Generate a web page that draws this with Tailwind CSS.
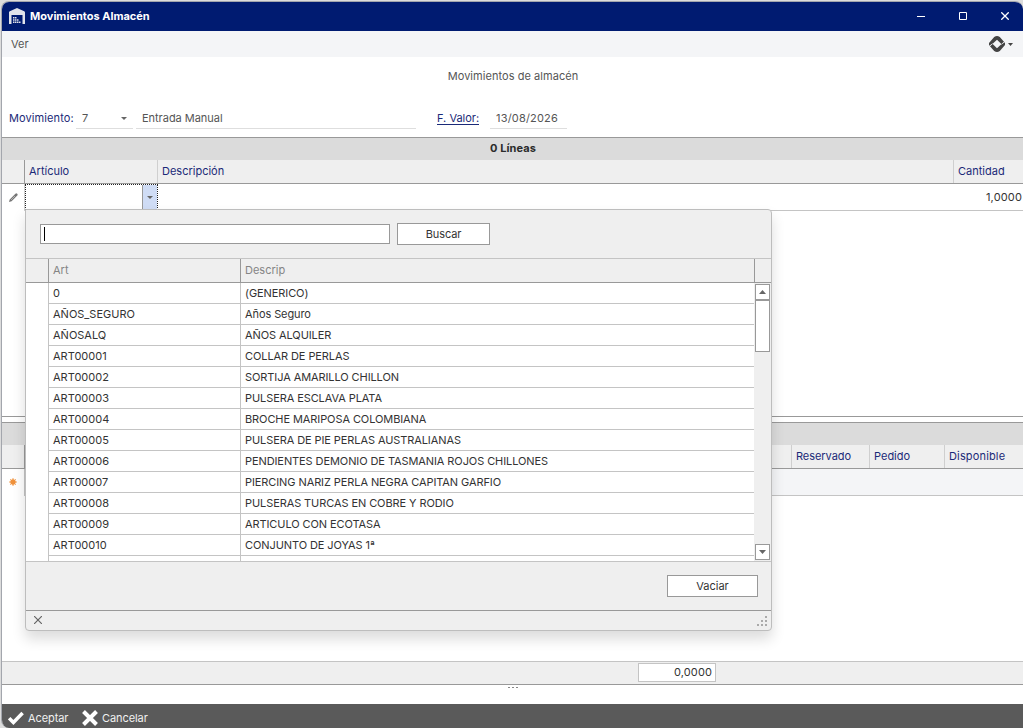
<!DOCTYPE html>
<html lang="es">
<head>
    <meta charset="UTF-8">
    <meta name="viewport" content="width=device-width, initial-scale=1.0">
    <title>Movimientos Almacén</title>
    <script src="https://cdn.jsdelivr.net/npm/@tailwindcss/browser@4"></script>
</head>
<body class="bg-[#dcdcdc] overflow-hidden font-['Inter','Liberation_Sans',sans-serif] text-[11px] leading-4 text-[#555]">
    <div class="pl-px pt-px w-[1023px] h-[728px]">
    <div class="relative flex flex-col h-[727px] border-l border-t border-[#a3a6ad] rounded-tl-lg rounded-tr-lg rounded-bl-lg overflow-hidden bg-white">

        <!-- Title bar -->
        <header class="flex items-center h-[29px] shrink-0 bg-[#001b71] text-white pl-[7px]">
            <svg class="w-4 h-4 -mt-px" viewBox="0 0 16 16" fill="#e0e3ea">
                <path d="M0 16V4.500Q0 3.600.8 3.200L8 0l7.200 3.200Q16 3.600 16 4.500V16h-2.500V7H2.500v9z"/>
                <path d="M4 9h1.500v1.500H4zM6 9h1.500v1.500H6zM4 11.300h1.500v1.500H4zM6 11.300h1.500v1.500H6zM8 11.300h1.500v1.500H8zM4 13.600h1.500v1.500H4zM6 13.600h1.500v1.500H6zM8 13.600h1.500v1.500H8zM10 13.600h1.500v1.500H10z"/>
            </svg>
            <h1 class="ml-[5px] -mt-[2px] font-bold">Movimientos Almacén</h1>
            <div class="ml-auto flex items-center gap-[34px] pr-[14px] -mt-px">
                <svg class="w-2 h-2" viewBox="0 0 8 8"><path d="M0 4.500h8" stroke="#fff"/></svg>
                <svg class="w-2 h-2" viewBox="0 0 8 8"><path d="M.5.5h7v7h-7z" fill="none" stroke="#fff"/></svg>
                <svg class="w-2 h-2" viewBox="0 0 8 8"><path d="M.3.3l7.400 7.400M7.700.3L.3 7.700" stroke="#fff" stroke-width="1.300"/></svg>
            </div>
        </header>

        <!-- Menu -->
        <nav class="flex items-center h-[26px] shrink-0 bg-[#f4f5f7] pl-[9px] pr-[10px]">
            <span>Ver</span>
            <svg class="ml-auto w-4 h-4" viewBox="0 0 16 16" fill="#444">
                <path d="M0 9.800V7L5.200 1Q8-.9 10.800 1L15.200 6 12.600 8.200 8 3.800 3.400 8z"/>
                <path d="M16 6.200V9L10.800 15Q8 16.900 5.200 15L.8 10 3.400 7.800 8 12.200 12.600 8z"/>
                <path d="M.4 10.300L3.600 7.700M15.600 5.700L12.400 8.300" stroke="#f4f5f7" stroke-width=".8"/>
            </svg>
            <svg class="ml-[3px] w-[5px] h-[3px]" viewBox="0 0 5 3" fill="#444"><path d="M0 0h5L2.500 3z"/></svg>
        </nav>

        <!-- Form -->
        <section class="h-20 shrink-0 pt-[11px] pl-[7px] tracking-[0.05px]">
            <h2 class="text-center pr-[6px]">Movimientos de almacén</h2>
            <div class="flex mt-[25px] h-5 leading-[19px]">
                <label class="w-[67px] tracking-[0.1px] text-[#1b2a78]">Movimiento:</label>
                <div class="flex items-center justify-between w-[57px] border-b border-[#dedede] pl-[6px] pr-[6px]">
                    <span>7</span>
                    <svg class="w-[6px] h-[3px]" viewBox="0 0 6 3" fill="#666"><path d="M0 0h6L3 3z"/></svg>
                </div>
                <div class="ml-[3px] w-[280px] border-b border-[#dedede] pl-[6px] tracking-[-0.03px]">Entrada Manual</div>
                <div class="ml-[21px] w-[53px]"><a class="inline-block h-4 border-b border-[#1b2a78] text-[#1b2a78] tracking-normal">F. Valor:</a></div>
                <div class="w-[77px] border-b border-[#dedede] pl-[6px] tracking-[0.18px]">13/08/2026</div>
            </div>
        </section>

        <!-- Lines grid -->
        <section class="h-[280px] shrink-0 border-y border-[#999]">
            <div class="h-[22px] bg-[#dbdbdb] text-center leading-[21px] font-bold text-[#2b2b2b] tracking-[0.08px] pl-px">0 Líneas</div>
            <div class="grid grid-cols-[23px_133px_796px_1fr] h-6 bg-[#efefef] border-b border-[#999] leading-[23px] text-[#1b2a78]">
                <div class="border-r border-[#999]"></div>
                <div class="border-r border-[#cfcfcf] pl-1">Artículo</div>
                <div class="border-r border-[#cfcfcf] pl-1">Descripción</div>
                <div class="pl-1">Cantidad</div>
            </div>
            <div class="flex h-[27px]">
                <div class="flex items-center w-[23px] border-r border-[#d0d0d0] pl-[7px]">
                    <svg class="w-[9px] h-[9px] -mt-px" viewBox="0 0 9 9"><path d="M0 9l.7-2.600L6.400.7Q7.300-.1 8.200.8t.1 1.800L2.600 8.300z" fill="#777"/><path d="M2 7l4-4" stroke="#ccc" stroke-width=".7"/></svg>
                </div>
                <div class="flex w-[133px] h-[26px] border border-dotted border-[#222]">
                    <div class="flex-1"></div>
                    <div class="flex items-center justify-center w-[15px] border-l border-[#999] bg-[#cfdcf5]">
                        <svg class="w-[6px] h-[3px]" viewBox="0 0 6 3" fill="#666"><path d="M0 0h6L3 3z"/></svg>
                    </div>
                </div>
                <div class="flex-1 border-b border-[#c4c4c4] pr-px text-right leading-[26px] text-[#333] tracking-[0.15px]">1,0000</div>
            </div>
        </section>

        <!-- Stock grid -->
        <section class="mt-[5px] h-[239px] shrink-0 border-t border-[#999]">
            <div class="h-[22px] bg-[#dbdbdb]"></div>
            <div class="grid grid-cols-[23px_767px_78px_75px_1fr] h-6 bg-[#efefef] border-b border-[#999] leading-[23px] text-[#1b2a78]">
                <div class="border-r border-[#999]"></div>
                <div class="border-r border-[#cfcfcf]"></div>
                <div class="border-r border-[#cfcfcf] pl-1 tracking-[-0.05px]">Reservado</div>
                <div class="border-r border-[#cfcfcf] pl-1">Pedido</div>
                <div class="pl-1 tracking-[0.15px]">Disponible</div>
            </div>
            <div class="flex h-[27px]">
                <div class="flex items-center w-[23px] border-r border-[#c4c4c4] pl-[7px]">
                    <svg class="w-2 h-2 -mt-[2px]" viewBox="0 0 8 8"><path d="M4 0v8M0 4h8M1.200 1.200l5.600 5.600M6.800 1.200L1.200 6.800" stroke="#f09a4a" stroke-width=".9"/><circle cx="4" cy="4" r="2.700" fill="#f0923c"/></svg>
                </div>
                <div class="flex-1 bg-[#f4f5f7] border-b border-[#c4c4c4]"></div>
            </div>
        </section>

        <!-- Totals -->
        <section class="h-6 shrink-0 bg-[#efefef] border-t border-t-[#c4c4c4] border-b border-b-[#999] pl-[636px] pt-px">
            <div class="w-[78px] h-[19px] bg-white border border-[#c4c4c4] pr-[3px] text-right leading-[17px] text-[#333] tracking-[0.1px]">0,0000</div>
        </section>
        <div class="flex justify-center gap-[2px] h-[19px] shrink-0 pt-[2px]">
            <i class="w-[2px] h-px bg-[#888]"></i>
            <i class="w-[2px] h-px bg-[#888]"></i>
            <i class="w-[2px] h-px bg-[#888]"></i>
        </div>

        <!-- Actions -->
        <footer class="flex items-center flex-1 bg-[#5a5a5a] text-[#f0f0f0] pl-[6px] pt-1 tracking-[-0.08px]">
            <svg class="w-4 h-[14px]" viewBox="0 0 16 14"><path d="M1.200 7.200l4.200 4.300L14.600 2" fill="none" stroke="#fff" stroke-width="3.500"/></svg>
            <span class="ml-1 w-10">Aceptar</span>
            <svg class="ml-[14px] w-4 h-4" viewBox="0 0 16 16"><path d="M1.500 1.500l13 13M14.500 1.500l-13 13" stroke="#fff" stroke-width="4"/></svg>
            <span class="ml-1">Cancelar</span>
        </footer>

        <!-- Article lookup -->
        <div class="absolute left-[23px] top-[207px] flex flex-col w-[747px] h-[422px] bg-[#efefef] border border-[#bdbdbd] rounded-b rounded-tr shadow-[0_8px_14px_rgba(0,0,0,0.14)] text-[#333] overflow-hidden">
            <div class="flex h-12 shrink-0 pl-[14px] pt-[13px]">
                <div class="w-[350px] h-5 mt-px bg-white border border-[#999] pl-[3px] pt-[2px]"><div class="w-px h-[14px] bg-black"></div></div>
                <button class="ml-[7px] w-[93px] h-[22px] bg-white border border-[#999] tracking-[-0.1px]">Buscar</button>
            </div>
            <div class="grid grid-cols-[23px_192px_514px_1fr] h-[25px] shrink-0 border-t border-t-[#c4c4c4] border-b border-b-[#999] leading-[23px] text-[#858585]">
                <div class="border-r border-[#999]"></div>
                <div class="border-r border-[#999] pl-1">Art</div>
                <div class="border-r border-[#999] pl-1">Descrip</div>
                <div></div>
            </div>
            <div class="flex h-[278px] shrink-0 overflow-hidden">
                <div class="w-[23px] bg-white border-r border-[#c4c4c4]"></div>
                <div id="articulos" class="w-[705px] bg-white"></div>
                <div class="flex flex-col w-[17px] p-px">
                    <div class="flex items-center justify-center h-4 bg-white border border-[#999]">
                        <svg class="w-[7px] h-1" viewBox="0 0 7 4" fill="#666"><path d="M0 4h7L3.500 0z"/></svg>
                    </div>
                    <div class="h-[52px] bg-white border border-[#999]"></div>
                    <div class="mt-auto flex items-center justify-center h-4 bg-white border border-[#999]">
                        <svg class="w-[7px] h-1" viewBox="0 0 7 4" fill="#666"><path d="M0 0h7L3.500 4z"/></svg>
                    </div>
                </div>
            </div>
            <div class="flex justify-end h-[49px] shrink-0 border-t border-[#c4c4c4] pt-[13px] pr-[13px]">
                <button class="w-[91px] h-[22px] bg-white border border-[#999]">Vaciar</button>
            </div>
            <div class="flex items-center flex-1 border-t border-[#999] pl-2 pr-1">
                <svg class="w-2 h-2 -mt-[2px]" viewBox="0 0 8 8"><path d="M0 0l8 8M8 0L0 8" stroke="#666" stroke-width="1.200"/></svg>
                <svg class="ml-auto w-[10px] h-[10px] mt-px" viewBox="0 0 10 10" fill="#aaa"><path d="M8 0h2v2H8zM4 4h2v2H4zM8 4h2v2H8zM0 8h2v2H0zM4 8h2v2H4zM8 8h2v2H8z"/></svg>
            </div>
        </div>
    </div>
    </div>

    <script>
        const articulos = [
            ['0', '(GENERICO)'],
            ['AÑOS_SEGURO', 'Años Seguro'],
            ['AÑOSALQ', 'AÑOS ALQUILER'],
            ['ART00001', 'COLLAR DE PERLAS'],
            ['ART00002', 'SORTIJA AMARILLO CHILLON'],
            ['ART00003', 'PULSERA ESCLAVA PLATA'],
            ['ART00004', 'BROCHE MARIPOSA COLOMBIANA'],
            ['ART00005', 'PULSERA DE PIE PERLAS AUSTRALIANAS'],
            ['ART00006', 'PENDIENTES DEMONIO DE TASMANIA ROJOS CHILLONES'],
            ['ART00007', 'PIERCING NARIZ PERLA NEGRA CAPITAN GARFIO'],
            ['ART00008', 'PULSERAS TURCAS EN COBRE Y RODIO'],
            ['ART00009', 'ARTICULO CON ECOTASA'],
            ['ART00010', 'CONJUNTO DE JOYAS 1ª'],
            ['', '']
        ];

        document.getElementById('articulos').innerHTML = articulos.map(([art, descrip]) => `
            <div class="grid grid-cols-[192px_1fr] h-[21px] border-b border-[#c4c4c4] leading-[20px]">
                <div class="border-r border-[#c4c4c4] pl-1">${art}</div>
                <div class="pl-1 tracking-[-0.09px]">${descrip}</div>
            </div>`).join('');
    </script>
</body>
</html>
